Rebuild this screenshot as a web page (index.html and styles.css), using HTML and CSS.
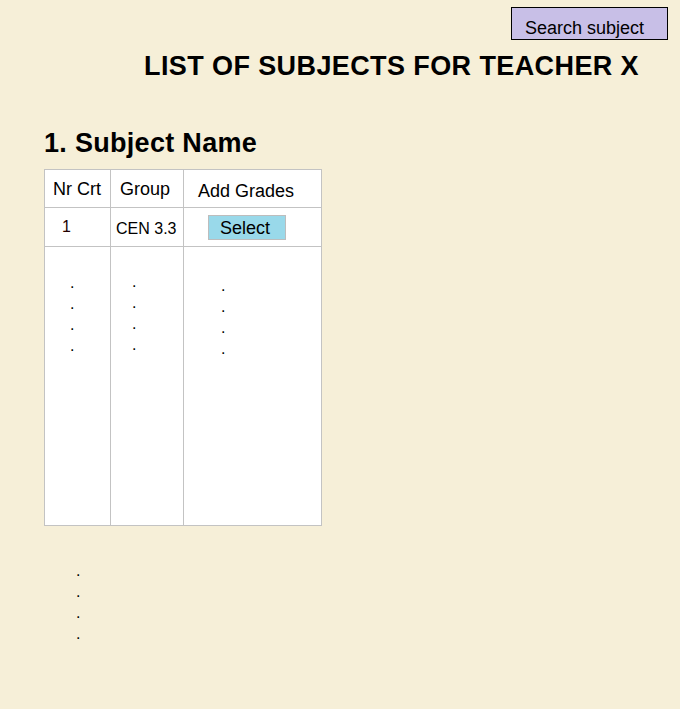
FILE: index.html
```html
<!DOCTYPE html>
<html lang="en">
<head>
<meta charset="utf-8">
<title>List of subjects</title>
<link rel="stylesheet" href="styles.css">
</head>
<body>
<header class="topbar">
  <button class="search-btn" type="button">Search subject</button>
</header>
<h1 class="page-title">LIST OF SUBJECTS FOR TEACHER X</h1>
<section class="subject">
  <h2 class="subject-title">1. Subject Name</h2>
  <div class="grid">
    <div class="cell head h1">Nr Crt</div>
    <div class="cell head h2">Group</div>
    <div class="cell head h3">Add Grades</div>
    <div class="cell row r1">1</div>
    <div class="cell row r2">CEN 3.3</div>
    <div class="cell row r3"><button class="select-btn" type="button">Select</button></div>
    <div class="cell dots d1">.<br>.<br>.<br>.</div>
    <div class="cell dots d2">.<br>.<br>.<br>.</div>
    <div class="cell dots d3">.<br>.<br>.<br>.</div>
  </div>
  <div class="more-dots">.<br>.<br>.<br>.</div>
</section>
</body>
</html>
```

FILE: styles.css
```css
html, body {
  margin: 0;
  padding: 0;
}
body {
  background: #f6efd8;
  font-family: "Liberation Sans", Arial, sans-serif;
  color: #000;
  width: 680px;
  height: 709px;
  overflow: hidden;
}
.topbar {
  display: flex;
  justify-content: flex-end;
  padding: 7px 12px 0 0;
}
.search-btn {
  box-sizing: border-box;
  width: 157px;
  height: 33px;
  background: #c8bfe7;
  border: 1px solid #000;
  font-family: "Liberation Sans", Arial, sans-serif;
  font-size: 18px;
  line-height: 20px;
  padding: 9px 0 0 13px;
  text-align: left;
  color: #000;
  margin: 0;
  border-radius: 0;
}
.page-title {
  margin: 10px 0 0 144px;
  font-size: 27px;
  line-height: 32px;
  font-weight: bold;
  letter-spacing: 0.4px;
}
.subject {
  padding-left: 44px;
}
.subject-title {
  margin: 45px 0 10px 0;
  font-size: 27px;
  line-height: 32px;
  font-weight: bold;
  letter-spacing: 0.3px;
}
.grid {
  display: grid;
  grid-template-columns: 65px 72px 137px;
  grid-template-rows: 37px 38px 278px;
  gap: 1px;
  padding: 1px;
  background: #c3c3c3;
  width: max-content;
}
.cell {
  background: #fff;
  box-sizing: border-box;
}
.head {
  font-size: 18px;
  line-height: 20px;
}
.h1 { padding: 9px 0 0 8px; }
.h2 { padding: 9px 0 0 9px; }
.h3 { padding: 11px 0 0 14px; }
.row {
  font-size: 16px;
  line-height: 18px;
}
.r1 { padding: 10px 0 0 17px; color: #200; }
.r2 { padding: 12px 0 0 5px; }
.r3 { padding: 7px 0 0 24px; }
.select-btn {
  display: block;
  box-sizing: border-box;
  width: 78px;
  height: 25px;
  margin: 0;
  padding: 1px 0 0 11px;
  background: #99d9ea;
  border: 1px solid #bdbdbd;
  border-radius: 0;
  font-family: "Liberation Sans", Arial, sans-serif;
  font-size: 18px;
  line-height: 21px;
  text-align: left;
  color: #000;
}
.dots {
  font-size: 16px;
  line-height: 21px;
}
.d1 { padding: 25px 0 0 25px; }
.d2 { padding: 24px 0 0 21px; }
.d3 { padding: 28px 0 0 37px; }
.more-dots {
  margin: 34px 0 0 32px;
  font-size: 16px;
  line-height: 21px;
}
```
